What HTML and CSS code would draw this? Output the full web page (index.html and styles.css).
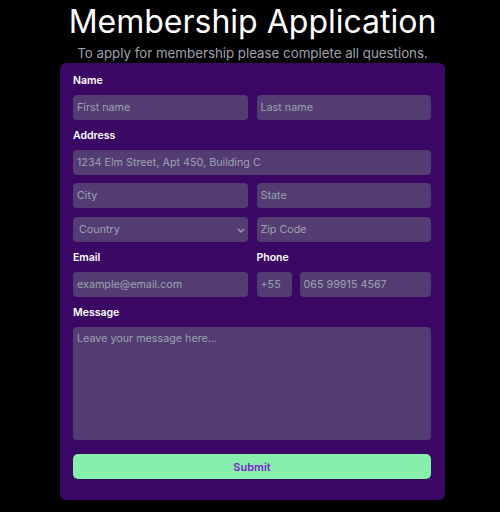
FILE: index.html
```html
<!DOCTYPE html>
<html>
<head>
<meta charset="utf-8">
<link rel="stylesheet" href="styles.css">
</head>
<body>
<div class="page">
  <h1 class="title">Membership Application</h1>
  <p class="subtitle">To apply for membership please complete all questions.</p>
  <form class="card">
    <label class="label">Name</label>
    <div class="row gap9">
      <input class="field" placeholder="First name">
      <input class="field" placeholder="Last name">
    </div>
    <label class="label">Address</label>
    <input class="field gap8" placeholder="1234 Elm Street, Apt 450, Building C">
    <div class="row gap9">
      <input class="field" placeholder="City">
      <input class="field" placeholder="State">
    </div>
    <div class="row gap9">
      <div class="select-wrap">
        <select class="field select"><option>Country</option></select>
        <svg class="chev" width="8" height="5" viewBox="0 0 8 5"><path d="M1 1l3 3 3-3" fill="none" stroke="#9ca3af" stroke-width="1.3"/></svg>
      </div>
      <input class="field" placeholder="Zip Code">
    </div>
    <div class="row gap9">
      <div class="col">
        <label class="label">Email</label>
        <input class="field" placeholder="example@email.com">
      </div>
      <div class="col">
        <label class="label">Phone</label>
        <div class="phone">
          <input class="field" placeholder="+55">
          <input class="field" placeholder="065 99915 4567">
        </div>
      </div>
    </div>
    <label class="label">Message</label>
    <textarea class="field area" placeholder="Leave your message here..."></textarea>
    <button type="button" class="submit">Submit</button>
  </form>
</div>
</body>
</html>
```
FILE: styles.css
```css
* { box-sizing: border-box; }
html, body { margin: 0; background: #000; }
body { font-family: Inter, "Noto Sans", sans-serif; }
.page {
  width: 385px;
  margin: 0 0 0 60px;
  display: flex;
  flex-direction: column;
}
.title {
  margin: 0;
  padding-top: 3px;
  font-size: 32px;
  font-weight: 400;
  line-height: 38px;
  color: #fff;
  text-align: center;
  white-space: nowrap;
}
.subtitle {
  margin: 2px 0 0;
  font-size: 13.3px;
  line-height: 20px;
  color: #9ca3af;
  text-align: center;
  white-space: nowrap;
}
.card {
  background: #3b0764;
  border-radius: 6px;
  padding: 11px 14px 21px 13px;
  display: flex;
  flex-direction: column;
}
.label {
  display: block;
  color: #fff;
  font-size: 10.5px;
  font-weight: 600;
  line-height: 14px;
  margin-bottom: 7px;
}
.row {
  display: grid;
  grid-template-columns: 1fr 1fr;
  gap: 9px;
}
.col { display: flex; flex-direction: column; }
.field {
  display: block;
  width: 100%;
  height: 25px;
  margin: 0;
  border: none;
  border-radius: 4px;
  background: rgba(107, 114, 128, 0.5);
  color: #e5e7eb;
  font-family: inherit;
  font-size: 10.75px;
  padding: 0 4px;
  outline: none;
}
.field::placeholder { color: #9ca3af; }
.gap9 { margin-bottom: 9px; }
.gap8 { margin-bottom: 8px; }
.select-wrap { position: relative; }
.select {
  appearance: none;
  -webkit-appearance: none;
  color: #9ca3af;
  padding-left: 6px;
}
.chev { position: absolute; right: 3px; top: 11px; }
.phone {
  display: grid;
  grid-template-columns: 35px 1fr;
  gap: 8px;
}
.area {
  height: 113px;
  resize: none;
  padding: 5px 4px;
  margin-bottom: 14px;
}
.submit {
  height: 25px;
  border: none;
  border-radius: 5px;
  background: #86efac;
  color: #7e22ce;
  font-family: inherit;
  font-size: 11px;
  font-weight: 600;
}
```
